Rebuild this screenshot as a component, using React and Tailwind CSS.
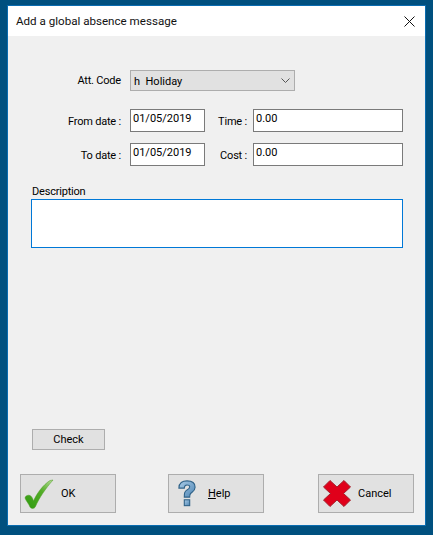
import React from 'react';

const font = { fontFamily: 'Roboto, sans-serif' };

function CheckIcon() {
  return (
    <svg width="30" height="30" viewBox="0 0 30 30" className="shrink-0">
      <defs>
        <linearGradient id="ok" x1="0" y1="1" x2="1" y2="0">
          <stop offset="0" stopColor="#2f9a10" />
          <stop offset="0.6" stopColor="#52ad26" />
          <stop offset="1" stopColor="#b5dd95" />
        </linearGradient>
      </defs>
      <path
        d="M1 19 C1 17 4 15.500 6 16.500 C8 17.500 9 20 9.500 22 C13 14 19 6 26 1.500 L29 1 C22 9 15 19 11.500 27.500 C10.500 30 7 30 6 28 C5 25 2 22 1 19 Z"
        fill="url(#ok)"
        stroke="#4c9a22"
        strokeWidth="0.5"
      />
    </svg>
  );
}

function HelpIcon() {
  return (
    <svg width="18" height="27" viewBox="0 0 20 30" className="shrink-0">
      <defs>
        <linearGradient id="help" x1="0" y1="0" x2="1" y2="1">
          <stop offset="0" stopColor="#a9cbe6" />
          <stop offset="1" stopColor="#4f86b5" />
        </linearGradient>
      </defs>
      <path
        d="M1 9 C1 3 5 1 10 1 C16 1 19 4 19 8 C19 12 16 13 14 15 C13 16 13 17 13 19 L7 19 C7 15 7 13 10 11 C12 10 13 9 13 7.500 C13 6 12 5.500 10 5.500 C8 5.500 7 7 7 9 Z"
        fill="url(#help)"
        stroke="#2f6288"
        strokeWidth="1.200"
      />
      <rect x="7" y="22" width="6" height="6.500" fill="url(#help)" stroke="#2f6288" strokeWidth="1.200" />
    </svg>
  );
}

function CancelIcon() {
  return (
    <svg width="28" height="27" viewBox="0 0 28 27" className="shrink-0">
      <path
        d="M7 0.500 L14 7 L21 0.500 L27.500 7 L20.500 13.500 L27.500 20 L21 26.500 L14 20 L7 26.500 L0.500 20 L7.500 13.500 L0.500 7 Z"
        fill="#e0001a"
        stroke="#a3202c"
        strokeWidth="1"
        strokeLinejoin="round"
      />
    </svg>
  );
}

function Field({ value, className }) {
  return (
    <div className={`h-[23px] border border-[#7a7a7a] bg-white pl-[2px] pt-[1px] text-[11px] leading-[15px] text-black ${className}`}>
      {value}
    </div>
  );
}

function BigButton({ icon, className, children }) {
  return (
    <div className={`flex h-[39px] w-[96px] items-center border border-[#adadad] bg-[#e1e1e1] text-[11px] text-black ${className}`}>
      {icon}
      {children}
    </div>
  );
}

export default function App() {
  return (
    <div style={font} className="h-[535px] w-[433px] overflow-hidden bg-[#00507f] pl-[7px] pt-[5px]">
      <div className="flex h-[521px] w-[419px] flex-col border border-[#0a6cb0] bg-[#f0f0f0]">
        <div className="flex h-[30px] shrink-0 items-center justify-between bg-white pl-[8px] pr-[10px]">
          <span className="pt-[2px] text-[11.6px] text-[#111]">Add a global absence message</span>
          <svg width="11" height="11" viewBox="0 0 11 11">
            <path d="M0.500 0.500 L10.500 10.500 M10.500 0.500 L0.500 10.500" stroke="#111" strokeWidth="1" fill="none" />
          </svg>
        </div>

        <div className="flex flex-1 flex-col pt-[34px]">
          <div className="flex h-[21px] items-center">
            <span className="w-[113px] pt-[2px] text-right text-[11px] tracking-[-0.2px] text-black">Att. Code</span>
            <div className="ml-[9px] flex h-[21px] w-[165px] items-center justify-between border border-[#adadad] bg-[#e1e1e1] pl-[3px] pr-[4px] text-[11px] text-black">
              <span className="pt-[3px]">h&nbsp; Holiday</span>
              <svg width="9" height="6" viewBox="0 0 9 6">
                <path d="M0.500 0.500 L4.500 4.500 L8.500 0.500" stroke="#555" strokeWidth="1" fill="none" />
              </svg>
            </div>
          </div>

          <div className="mt-[18px] flex items-center">
            <span className="w-[113px] pt-[3px] text-right text-[11px] tracking-[-0.2px] text-black">From date :</span>
            <Field value="01/05/2019" className="ml-[9px] w-[75px]" />
            <span className="w-[42px] pt-[3px] text-right text-[11px] tracking-[-0.2px] text-black">Time :</span>
            <Field value="0.00" className="ml-[6px] w-[150px]" />
          </div>

          <div className="mt-[11px] flex items-center">
            <span className="w-[113px] pt-[3px] text-right text-[11px] tracking-[-0.2px] text-black">To date :</span>
            <Field value="01/05/2019" className="ml-[9px] w-[75px]" />
            <span className="w-[42px] pt-[3px] text-right text-[11px] tracking-[-0.2px] text-black">Cost :</span>
            <Field value="0.00" className="ml-[6px] w-[150px]" />
          </div>

          <div className="ml-[24px] mt-[17px] pt-[1px] text-[11px] leading-[15px] tracking-[-0.2px] text-black">Description</div>
          <div className="ml-[23px] h-[49px] w-[372px] border border-[#0078d7] bg-white" />

          <div className="ml-[24px] mt-[181px] flex h-[21px] w-[73px] items-center justify-center border border-[#adadad] bg-[#e1e1e1] pt-[2px] text-[11px] text-black">
            Check
          </div>

          <div className="mt-[24px] flex pl-[12px]">
            <BigButton icon={<CheckIcon />} className="pl-[3px]">
              <span className="ml-[7px] pt-[2px]">OK</span>
            </BigButton>
            <BigButton icon={<HelpIcon />} className="ml-[52px] pl-[9px]">
              <span className="ml-[12px] pt-[2px]"><u>H</u>elp</span>
            </BigButton>
            <BigButton icon={<CancelIcon />} className="ml-[54px] pl-[4px]">
              <span className="ml-[7px] pt-[2px]">Cancel</span>
            </BigButton>
          </div>
        </div>
      </div>
    </div>
  );
}
